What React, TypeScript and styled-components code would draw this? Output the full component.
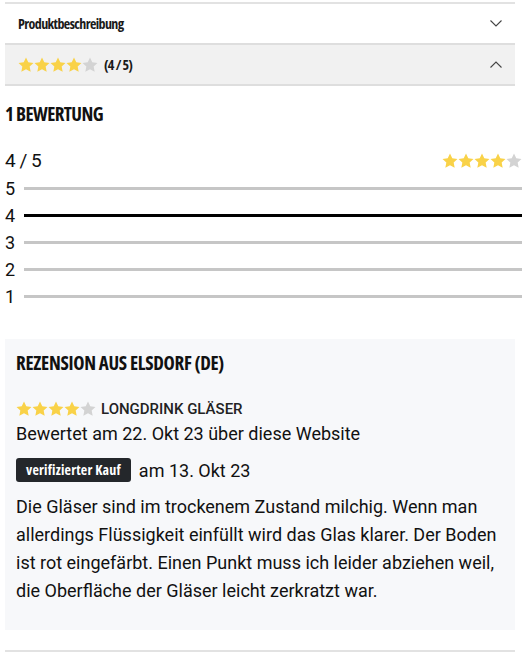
import * as React from 'react'
import styled, { createGlobalStyle } from 'styled-components'

const GlobalStyle = createGlobalStyle`
  body {
    margin: 0;
    background: #fff;
    color: #111;
    font-family: Roboto, "Liberation Sans", Arial, sans-serif;
  }
`

const condensed = `
  font-family: "Open Sans", "DejaVu Sans Condensed", sans-serif;
  font-stretch: 75%;
  font-weight: bold;
`

const Page = styled.div`
  padding: 2px 9px 0 5px;
`

const Accordion = styled.div`
  border-top: 2px solid #e2e2e2;
  margin-right: 7px;
`

const AccordionRow = styled.div<{ $open?: boolean }>`
  display: flex;
  align-items: center;
  justify-content: space-between;
  height: 39px;
  padding: 0 13px 0 13px;
  background: ${(p) => (p.$open ? '#f1f1f1' : '#fff')};
  border-bottom: 2px solid #dedede;
`

const RowTitle = styled.div`
  display: flex;
  align-items: center;
  gap: 6px;
  ${condensed}
  font-size: 14px;
  letter-spacing: -0.6px;
  color: #1a1a1a;
`

const Heading = styled.h2`
  margin: 16px 0 0;
  ${condensed}
  font-size: 19px;
  letter-spacing: -0.6px;
  line-height: 24px;
  color: #111;
`

const Summary = styled.div`
  display: flex;
  justify-content: space-between;
  align-items: center;
  margin-top: 24px;
  font-size: 19px;
  line-height: 22px;
  letter-spacing: -0.5px;
`

const Bars = styled.div`
  display: flex;
  flex-direction: column;
  gap: 9px;
  margin-top: 7px;
`

const BarRow = styled.div`
  display: flex;
  align-items: center;
  height: 18px;
  font-size: 18px;
`

const BarLabel = styled.span`
  width: 19px;
  flex: none;
`

const BarLine = styled.div<{ $active?: boolean }>`
  flex: 1;
  height: 3px;
  background: ${(p) => (p.$active ? '#000' : '#c6c6c6')};
`

const Card = styled.div`
  margin: 34px 7px 0 0;
  padding: 12px 11px 25px 11px;
  background: #f7f8fa;
`

const CardTitle = styled.h3`
  margin: 0;
  ${condensed}
  font-size: 19px;
  letter-spacing: -0.3px;
  line-height: 24px;
  color: #111;
`

const ProductLine = styled.div`
  display: flex;
  align-items: center;
  gap: 5px;
  margin-top: 25px;
  font-size: 15px;
  font-weight: 500;
  color: #222;
`

const Meta = styled.div`
  margin-top: 4px;
  font-size: 18px;
  line-height: 24px;
`

const Verified = styled.div`
  display: flex;
  align-items: center;
  gap: 8px;
  margin-top: 12px;
  font-size: 18px;
`

const Badge = styled.span`
  background: #24272b;
  color: #fff;
  border-radius: 3px;
  padding: 2px 10px 3px;
  ${condensed}
  font-stretch: 87.5%;
  font-size: 14px;
  letter-spacing: 0.2px;
`

const Body = styled.p`
  margin: 11px 0 0;
  font-size: 18px;
  line-height: 28px;
`

const Footer = styled.div`
  margin: 20px 7px 0 0;
  border-top: 2px solid #e2e2e2;
`

const StarRow = styled.span<{ $size: number }>`
  display: inline-flex;
  svg {
    width: ${(p) => p.$size}px;
    height: ${(p) => p.$size}px;
  }
`

const Stars = ({ value, size }: { value: number; size: number }) => (
  <StarRow $size={size}>
    {[1, 2, 3, 4, 5].map((i) => (
      <svg key={i} viewBox="0 0 24 24">
        <path
          d="M12 .8l3.4 7.2 7.8 1-5.7 5.4 1.5 7.8L12 18.4l-7 3.8 1.5-7.8L.8 9l7.8-1z"
          fill={i <= value ? '#f9d248' : '#d3d3d3'}
        />
      </svg>
    ))}
  </StarRow>
)

const Chevron = ({ up }: { up?: boolean }) => (
  <svg width="12" height="7" viewBox="0 0 12 7" fill="none" stroke="#444" strokeWidth="1.1">
    <path d={up ? 'M.5 6.5l5.5-5.5 5.5 5.5' : 'M.5 .5l5.5 5.5 5.5-5.5'} />
  </svg>
)

const App = () => {
  return (
    <Page>
      <GlobalStyle />
      <Accordion>
        <AccordionRow>
          <RowTitle>Produktbeschreibung</RowTitle>
          <Chevron />
        </AccordionRow>
        <AccordionRow $open>
          <RowTitle>
            <Stars value={4} size={16} />
            (4 / 5)
          </RowTitle>
          <Chevron up />
        </AccordionRow>
      </Accordion>

      <Heading>1 BEWERTUNG</Heading>
      <Summary>
        <span>4 / 5</span>
        <Stars value={4} size={16} />
      </Summary>
      <Bars>
        {[5, 4, 3, 2, 1].map((n) => (
          <BarRow key={n}>
            <BarLabel>{n}</BarLabel>
            <BarLine $active={n === 4} />
          </BarRow>
        ))}
      </Bars>

      <Card>
        <CardTitle>REZENSION AUS ELSDORF (DE)</CardTitle>
        <ProductLine>
          <Stars value={4} size={16} />
          LONGDRINK GLÄSER
        </ProductLine>
        <Meta>Bewertet am 22. Okt 23 über diese Website</Meta>
        <Verified>
          <Badge>verifizierter Kauf</Badge>
          am 13. Okt 23
        </Verified>
        <Body>
          Die Gläser sind im trockenem Zustand milchig. Wenn man allerdings Flüssigkeit einfüllt wird
          das Glas klarer. Der Boden ist rot eingefärbt. Einen Punkt muss ich leider abziehen weil,
          die Oberfläche der Gläser leicht zerkratzt war.
        </Body>
      </Card>
      <Footer />
    </Page>
  )
}

export default App
